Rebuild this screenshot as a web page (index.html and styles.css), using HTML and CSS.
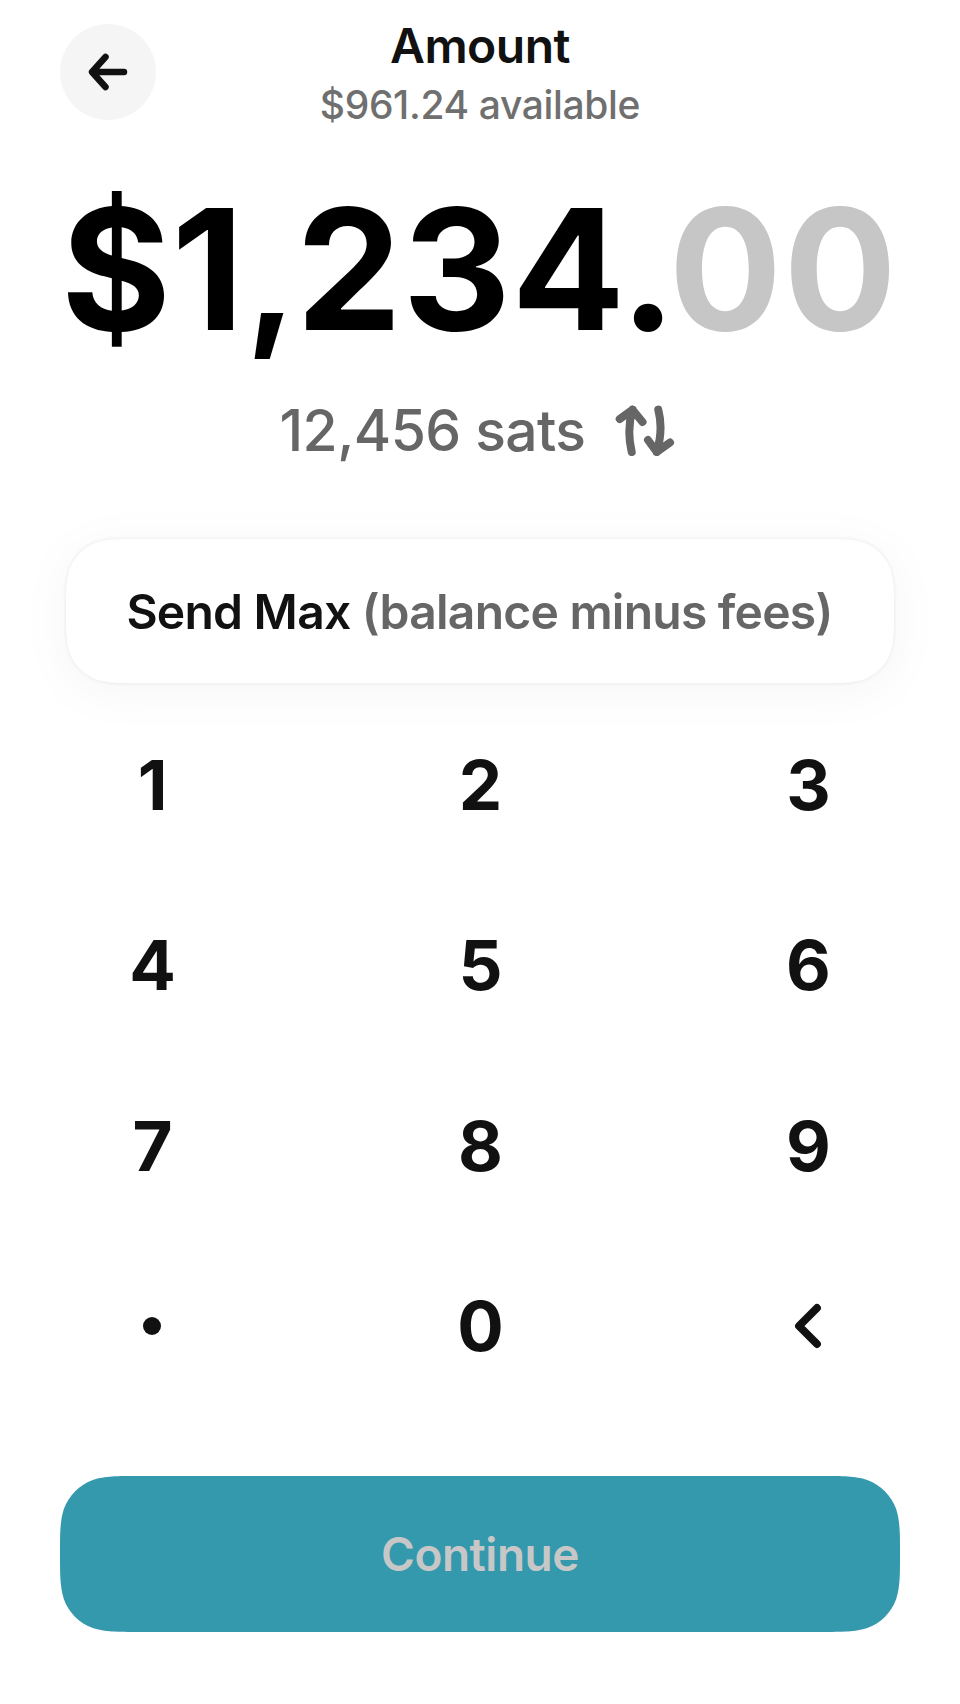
FILE: index.html
```html
<!DOCTYPE html>
<html lang="en">
<head>
<meta charset="utf-8">
<title>Amount</title>
<link rel="stylesheet" href="styles.css">
</head>
<body>
<main class="screen">
  <header class="header">
    <button class="back" aria-label="Back"><svg width="96" height="96" viewBox="0 0 96 96"><path d="M64 48H32.500M45.500 33L32 48L45.500 63"/></svg></button>
    <div class="heading"><h1 class="title">Amount</h1><p class="available">$961.24 available</p></div>
  </header>
  <div class="amount">$1<span class="comma">,</span>234.<span class="cents">00</span></div>
  <div class="sats"><span>12,456 sats</span><svg class="swap" width="60" height="52" viewBox="0 0 60 52"><path d="M16.700 48Q11.500 26 17.500 5.700M4.700 15L17.500 5.700L27.500 18M43.300 5.700Q48.500 26 41.700 48M33 36L41.700 48L55 38.500"/></svg></div>
  <div class="max-wrap"><button class="max">Send Max <span class="muted">(balance minus fees)</span></button></div>
  <div class="keypad">
    <button class="key">1</button><button class="key">2</button><button class="key">3</button>
    <button class="key">4</button><button class="key">5</button><button class="key">6</button>
    <button class="key">7</button><button class="key">8</button><button class="key">9</button>
    <button class="key icon-key" aria-label="Decimal point"><span class="dot"></span></button><button class="key">0</button><button class="key icon-key" aria-label="Delete"><svg width="40" height="56" viewBox="0 0 40 56"><path d="M29 10L11 28L29 46"/></svg></button>
  </div>
  <button class="continue">Continue</button>
</main>
</body>
</html>
```
FILE: styles.css
```css
* { box-sizing: border-box; }
body { margin: 0; background: #fff; font-family: Inter, sans-serif; }
button { border: 0; padding: 0; margin: 0; font: inherit; color: inherit; background: none; }
svg { display: block; fill: none; stroke: currentColor; stroke-linecap: round; stroke-linejoin: round; }
.screen { width: 960px; height: 1704px; padding: 24px 60px 0; color: #111; display: flex; flex-direction: column; overflow: hidden; }
.header { height: 108px; display: grid; grid-template-columns: 96px 1fr 96px; flex: none; }
.back { width: 96px; height: 96px; border-radius: 50%; background: #f5f5f5; }
.back svg { stroke-width: 6.5; }
.heading { text-align: center; }
.title { margin: -7px 0 0; font-size: 48px; line-height: 58px; font-weight: 600; letter-spacing: -0.5px; }
.available { margin: 5px 0 0; font-size: 39px; line-height: 50px; color: #6f6f6f; font-weight: 450; letter-spacing: -0.35px; }
.amount { height: 240px; margin-top: 17px; padding-left: 1px; line-height: 240px; font-size: 168px; font-weight: 700; letter-spacing: 0.6px; white-space: nowrap; color: #000; flex: none; }
.comma { margin: 0 -1px 0 1px; font-size: 152px; line-height: 1; }
.cents { margin-left: -8px; letter-spacing: 1.4px; color: #c6c6c6; }
.sats { height: 80px; margin-top: 1px; padding-right: 5px; display: flex; align-items: center; justify-content: center; gap: 30px; font-size: 57px; color: #666; flex: none; font-weight: 500; letter-spacing: -0.6px; }
.swap { stroke-width: 8; }
.max-wrap { height: 144px; margin: 69px 6px 0; filter: drop-shadow(0 0 2px rgba(0,0,0,.09)) drop-shadow(0 8px 22px rgba(0,0,0,.04)); flex: none; }
.max { width: 828px; height: 144px; padding-right: 1px; background: #fff; font-size: 48px; font-weight: 600; letter-spacing: -0.76px; clip-path: path("M73 0H755C776 0 786.3 0 797.7 3.6C810.1 8.1 819.9 17.9 824.4 30.3C828 41.7 828 52 828 72C828 92 828 102.3 824.4 113.7C819.9 126.1 810.1 135.9 797.7 140.4C786.3 144 776 144 755 144H73C52 144 41.7 144 30.3 140.4C17.9 135.9 8.1 126.1 3.6 113.7C0 102.3 0 92 0 72C0 52 0 41.7 3.6 30.3C8.1 17.9 17.9 8.1 30.3 3.6C41.7 0 52 0 73 0Z"); }
.muted { color: #666; }
.keypad { height: 721px; margin-top: 12px; display: grid; grid-template-columns: 184px 1fr 184px; grid-template-rows: repeat(4, 1fr); flex: none; }
.key { display: flex; align-items: center; justify-content: center; padding-left: 1px; font-size: 69px; font-weight: 700; }
.icon-key { padding-left: 0; }
.key svg { stroke-width: 7.8; }
.dot { width: 18px; height: 18px; border-radius: 50%; background: #111; }
.continue { height: 156px; margin-top: 60px; background: #3499ac; color: #c7c7c7; font-size: 46px; font-weight: 600; letter-spacing: -0.5px; flex: none; clip-path: path("M79.5 0H760.5C783.4 0 794.8 0 807.2 3.9C820.6 8.8 831.2 19.4 836.1 32.8C840 45.2 840 56.6 840 78C840 99.4 840 110.8 836.1 123.2C831.2 136.6 820.6 147.2 807.2 152.1C794.8 156 783.4 156 760.5 156H79.5C56.6 156 45.2 156 32.8 152.1C19.4 147.2 8.8 136.6 3.9 123.2C0 110.8 0 99.4 0 78C0 56.6 0 45.2 3.9 32.8C8.8 19.4 19.4 8.8 32.8 3.9C45.2 0 56.6 0 79.5 0Z"); }
```
